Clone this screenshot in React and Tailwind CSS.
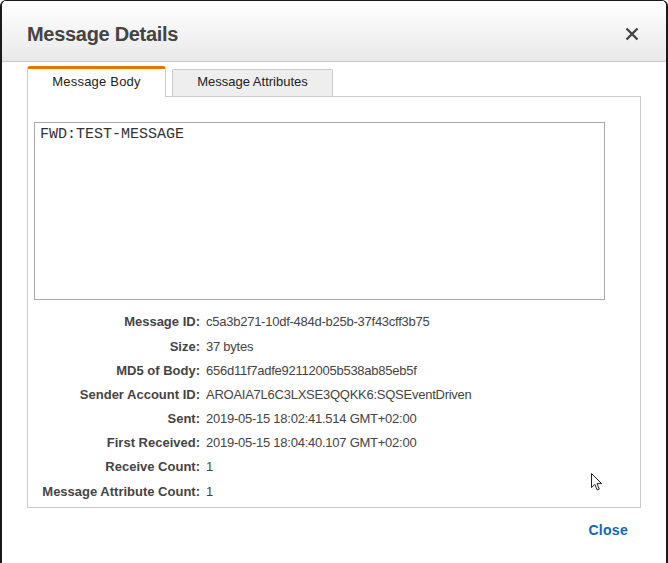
import React from 'react';

const details = [
  ['Message ID:', 'c5a3b271-10df-484d-b25b-37f43cff3b75'],
  ['Size:', '37 bytes'],
  ['MD5 of Body:', '656d11f7adfe92112005b538ab85eb5f'],
  ['Sender Account ID:', 'AROAIA7L6C3LXSE3QQKK6:SQSEventDriven'],
  ['Sent:', '2019-05-15 18:02:41.514 GMT+02:00'],
  ['First Received:', '2019-05-15 18:04:40.107 GMT+02:00'],
  ['Receive Count:', '1'],
  ['Message Attribute Count:', '1'],
];

const App = () => {
  return (
    <div className="w-[668px] h-[563px] bg-white overflow-hidden" style={{ fontFamily: '"Liberation Sans", Arial, sans-serif' }}>
      <div className="relative h-[563px] border-t border-l-2 border-r-2 border-[#1a1a1a] rounded-t-[6px] overflow-hidden">
        {/* Header */}
        <div className="h-[61px] bg-linear-to-b from-white to-[#e9e9e9] border-b border-[#cccccc] flex items-center justify-between pl-[25px] pr-[27px]">
          <h1 className="text-[20px] font-bold text-[#444444] tracking-[-0.3px] pt-[5px]">Message Details</h1>
          <button type="button" className="w-[14px] h-[14px] flex items-center justify-center mt-[5px]">
            <svg width="14" height="14" viewBox="0 0 14 14">
              <path d="M1.5 1.5 L12.5 12.5 M12.5 1.5 L1.5 12.5" stroke="#444444" strokeWidth="2.4" />
            </svg>
          </button>
        </div>

        {/* Tabs */}
        <div className="ml-[25px] mr-[25px] mt-[4px]">
          <div className="flex items-end gap-[6px] h-[30px]">
            <div className="relative z-10 w-[139px] h-[31px] -mb-px bg-white border-t-[3px] border-t-[#e07800] border-x border-x-[#cccccc] rounded-t-[3px] flex items-center justify-center text-[13px] tracking-[0.2px] text-[#222222] pb-[3px]">
              Message Body
            </div>
            <div className="w-[161px] h-[27px] bg-[#eeeeee] border border-[#cccccc] border-b-0 rounded-t-[2px] flex items-center justify-center text-[13px] text-[#222222] pb-[2px]">
              Message Attributes
            </div>
          </div>

          {/* Panel */}
          <div className="h-[412px] border border-[#cccccc] pt-[25px] pl-[6px]">
            <div className="w-[571px] h-[178px] border border-[#aaaaaa] px-[5px] pt-[1px] text-[15px] text-[#333333]" style={{ fontFamily: '"Liberation Mono", "Courier New", monospace' }}>
              FWD:TEST-MESSAGE
            </div>

            <div className="mt-[10px] flex flex-col">
              {details.map(([label, value]) => (
                <div key={label} className="flex items-center h-[24.2px] text-[13px] text-[#444444]">
                  <div className="w-[166px] text-right font-bold">{label}</div>
                  <div className="pl-[6px] tracking-[-0.25px]">{value}</div>
                </div>
              ))}
            </div>
          </div>
        </div>

        {/* Footer */}
        <div className="flex justify-end pr-[38px] pt-[12px]">
          <a href="#" className="text-[14px] font-bold tracking-[0.3px] text-[#1166bb]">Close</a>
        </div>

        {/* Mouse cursor */}
        <svg className="absolute left-[588px] top-[471px]" width="14" height="20" viewBox="0 0 14 20">
          <path d="M1.5 1.5 L1.5 15.5 L4.8 12.4 L7.2 18 L9.3 17.1 L7 11.6 L11.6 11.6 Z" fill="white" stroke="#222222" strokeWidth="1" strokeLinejoin="miter" />
        </svg>
      </div>
    </div>
  );
};

export default App;
